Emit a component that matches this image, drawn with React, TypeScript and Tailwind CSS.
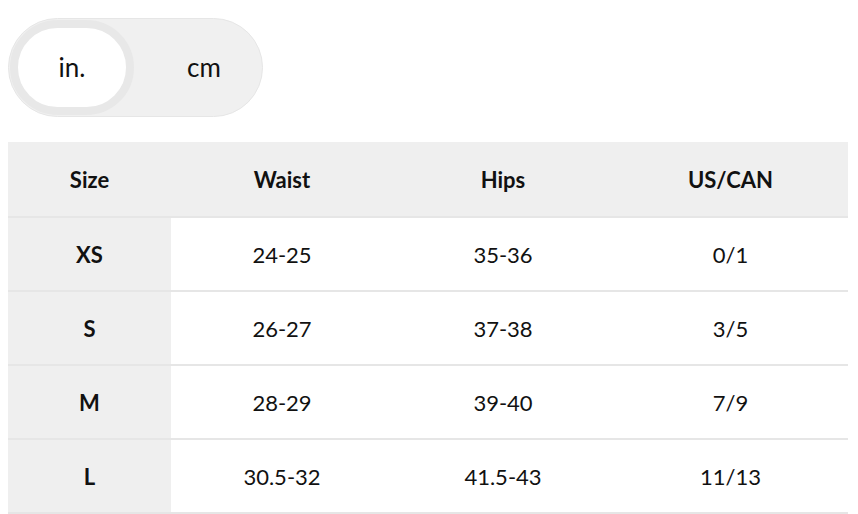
import { useState } from "react";

type Unit = "in" | "cm";

const rows = [
  { size: "XS", waist: "24-25", hips: "35-36", us: "0/1" },
  { size: "S", waist: "26-27", hips: "37-38", us: "3/5" },
  { size: "M", waist: "28-29", hips: "39-40", us: "7/9" },
  { size: "L", waist: "30.5-32", hips: "41.5-43", us: "11/13" },
];

const cols = "grid grid-cols-[163px_222px_220px_235px]";

export default function App() {
  const [unit, setUnit] = useState<Unit>("in");

  return (
    <div className="w-[858px] h-[514px] bg-white text-[#111] font-['Lato','Open_Sans',sans-serif] overflow-hidden">
      {/* Unit toggle */}
      <div className="pl-2 pt-[18px]">
        <div className="flex items-center w-[255px] h-[99px] rounded-full bg-[#f0f0f0] border border-[#e6e6e6] p-px">
          <button
            onClick={() => setUnit("in")}
            className={`w-[124px] h-[95px] rounded-full text-[26px] flex items-center justify-center ${
              unit === "in" ? "bg-white border-[8px] border-[#e8e8e8]" : ""
            }`}
          >
            in.
          </button>
          <button
            onClick={() => setUnit("cm")}
            className={`w-[124px] h-[95px] pl-[16px] rounded-full text-[26px] flex items-center justify-center ${
              unit === "cm" ? "bg-white border-[8px] border-[#e8e8e8]" : ""
            }`}
          >
            cm
          </button>
        </div>
      </div>

      {/* Size table */}
      <div className="mt-[25px] ml-2 w-[840px]">
        <div className={`${cols} h-[74px] bg-[#efefef] items-center text-center text-[22px] font-bold`}>
          <div>Size</div>
          <div>Waist</div>
          <div>Hips</div>
          <div>US/CAN</div>
        </div>
        {rows.map((r) => (
          <div key={r.size} className={`${cols} h-[74px] border-t-2 border-[#e6e6e6] text-center text-[22px]`}>
            <div className="bg-[#efefef] flex items-center justify-center font-bold">{r.size}</div>
            <div className="flex items-center justify-center">{r.waist}</div>
            <div className="flex items-center justify-center">{r.hips}</div>
            <div className="flex items-center justify-center">{r.us}</div>
          </div>
        ))}
        <div className="border-t-2 border-[#e6e6e6]" />
      </div>
    </div>
  );
}
